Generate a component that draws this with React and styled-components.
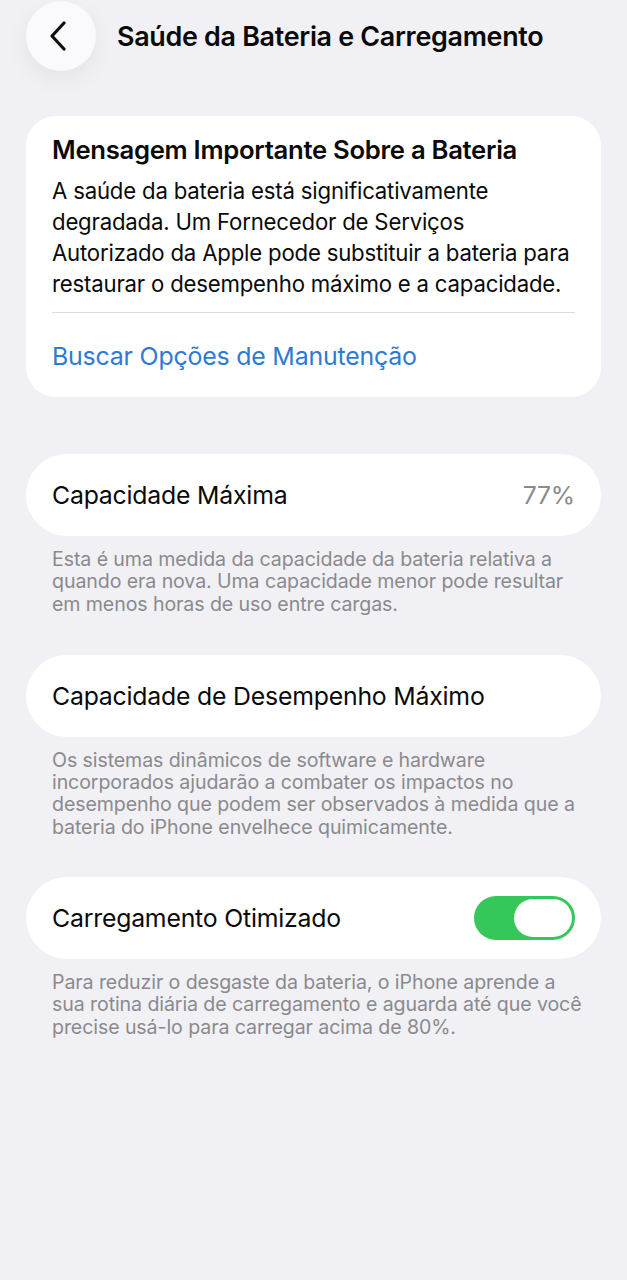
import React from 'react';
import styled, { createGlobalStyle } from 'styled-components';

const GlobalStyle = createGlobalStyle`
	html, body {
		margin: 0;
		padding: 0;
		background: #f1f0f5;
	}
	body {
		font-family: Inter, "Noto Sans", "Liberation Sans", sans-serif;
		color: #0a0a0a;
		-webkit-font-smoothing: antialiased;
	}
`;

const Page = styled.div`
	width: 627px;
	min-height: 1280px;
	padding: 1px 26px 0;
	box-sizing: border-box;
	background: #f1f0f5;
`;

const Header = styled.div`
	display: flex;
	align-items: center;
	gap: 21px;
	height: 70px;
`;

const BackButton = styled.button`
	width: 70px;
	height: 70px;
	border-radius: 50%;
	border: none;
	background: #fafafc;
	box-shadow: 0 8px 24px rgba(0, 0, 0, 0.06);
	display: flex;
	align-items: center;
	justify-content: center;
	padding: 0 4px 0 0;
	flex-shrink: 0;
`;

const Title = styled.h1`
	margin: 0;
	font-size: 26.9px;
	font-weight: 600;
	letter-spacing: -0.3px;
	color: #0a0a0a;
	white-space: nowrap;
`;

const Card = styled.div`
	background: #fff;
	border-radius: ${(p) => (p.pill ? '41px' : '30px')};
	margin-top: ${(p) => p.top}px;
`;

const MessageBody = styled.div`
	padding: 19px 26px 0;
`;

const CardTitle = styled.div`
	font-size: 25.7px;
	font-weight: 600;
	line-height: 30px;
	letter-spacing: -0.3px;
	white-space: nowrap;
`;

const Paragraph = styled.p`
	margin: 10px 0 0;
	font-size: 22.2px;
	line-height: 31px;
	letter-spacing: -0.2px;
	padding-bottom: 13px;
	white-space: nowrap;
`;

const Divider = styled.div`
	height: 1px;
	background: #dcdce0;
	margin: 0 26px;
`;

const LinkRow = styled.div`
	padding: 28px 26px 26px;
	font-size: 24.9px;
	line-height: 30px;
	color: #2f7ad5;
	letter-spacing: -0.2px;
`;

const Row = styled.div`
	display: flex;
	align-items: center;
	justify-content: space-between;
	height: 82px;
	padding: 0 26px;
	font-size: 24.8px;
	letter-spacing: -0.2px;
`;

const Value = styled.span`
	color: #8a8a8e;
`;

const Footer = styled.p`
	margin: 0;
	padding: 12px 26px 0;
	font-size: 19.6px;
	line-height: 22.3px;
	letter-spacing: -0.1px;
	color: #8a8a8e;
	white-space: nowrap;
`;

const Toggle = styled.div`
	width: 101px;
	height: 44px;
	border-radius: 22px;
	background: #35c759;
	display: flex;
	align-items: center;
	justify-content: flex-end;
	padding: 3px;
	box-sizing: border-box;
`;

const Knob = styled.div`
	width: 58px;
	height: 38px;
	border-radius: 19px;
	background: #fff;
`;

function ChevronLeft() {
	return (
		<svg width="22" height="30" viewBox="0 0 22 30" fill="none">
			<path d="M16 2 L4 15 L16 28" stroke="#111" strokeWidth="3.2" strokeLinecap="round" strokeLinejoin="round" />
		</svg>
	);
}

export default function App() {
	return (
		<>
			<GlobalStyle />
			<Page>
				<Header>
					<BackButton aria-label="Voltar">
						<ChevronLeft />
					</BackButton>
					<Title>Saúde da Bateria e Carregamento</Title>
				</Header>

				<Card top={45}>
					<MessageBody>
						<CardTitle>Mensagem Importante Sobre a Bateria</CardTitle>
						<Paragraph>
							A saúde da bateria está significativamente<br />
							degradada. Um Fornecedor de Serviços<br />
							Autorizado da Apple pode substituir a bateria para<br />
							restaurar o desempenho máximo e a capacidade.
						</Paragraph>
					</MessageBody>
					<Divider />
					<LinkRow>Buscar Opções de Manutenção</LinkRow>
				</Card>

				<Card pill top={57}>
					<Row>
						<span>Capacidade Máxima</span>
						<Value>77%</Value>
					</Row>
				</Card>
				<Footer>
					Esta é uma medida da capacidade da bateria relativa a<br />
					quando era nova. Uma capacidade menor pode resultar<br />
					em menos horas de uso entre cargas.
				</Footer>

				<Card pill top={40}>
					<Row>
						<span>Capacidade de Desempenho Máximo</span>
					</Row>
				</Card>
				<Footer>
					Os sistemas dinâmicos de software e hardware<br />
					incorporados ajudarão a combater os impactos no<br />
					desempenho que podem ser observados à medida que a<br />
					bateria do iPhone envelhece quimicamente.
				</Footer>

				<Card pill top={39}>
					<Row>
						<span>Carregamento Otimizado</span>
						<Toggle>
							<Knob />
						</Toggle>
					</Row>
				</Card>
				<Footer>
					Para reduzir o desgaste da bateria, o iPhone aprende a<br />
					sua rotina diária de carregamento e aguarda até que você<br />
					precise usá-lo para carregar acima de 80%.
				</Footer>
			</Page>
		</>
	);
}
